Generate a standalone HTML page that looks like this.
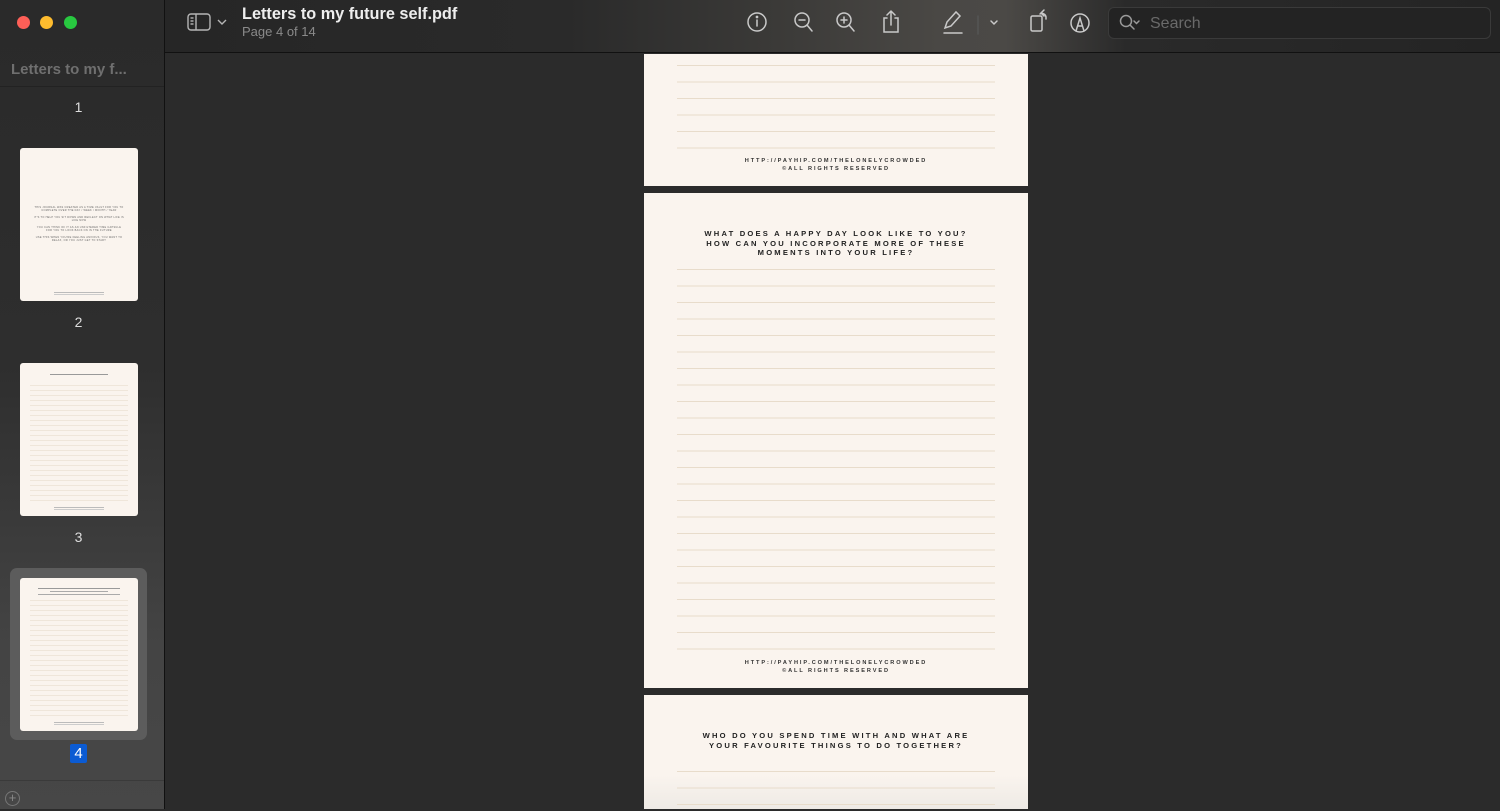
<!DOCTYPE html>
<html><head><meta charset="utf-8"><style>
*{margin:0;padding:0;box-sizing:border-box}
body{width:1500px;height:809px;overflow:hidden;background:#2b2b2b;font-family:"Liberation Sans",sans-serif;position:relative}
.abs{position:absolute}
#side{left:0;top:0;width:165px;height:809px;background:linear-gradient(#2a2a2a 0%,#2e2e2e 45%,#444 80%,#474747 100%);border-right:1px solid #111}
#tb{left:165px;top:0;width:1335px;height:53px;background:linear-gradient(90deg,#262626 0%,#2a2a2a 30%,#3a3937 45%,#4a4845 58%,#4b4946 63%,#2a2a2a 72%,#242424 100%);border-bottom:1px solid #111}
.th{position:absolute;left:20px;width:118px;height:153px;background:#faf4ee;border-radius:3px}
.num{position:absolute;left:0;width:157px;text-align:center;color:#ddd;font-size:14px}
.pg{position:absolute;left:644px;width:384px;background:#faf4ee}
.lines{position:absolute;left:33px;width:318px;background:repeating-linear-gradient(#e8dccb 0 1px,transparent 1px 16.5px)}
.q{position:absolute;left:0;width:384px;text-align:center;font-size:7.6px;font-weight:bold;letter-spacing:2.2px;line-height:9.5px;color:#222}
.ft{position:absolute;left:0;width:384px;text-align:center;font-size:5.6px;font-weight:bold;letter-spacing:1.9px;line-height:7.5px;color:#333}
.tl{position:absolute;left:10px;width:98px;background:repeating-linear-gradient(#efe6da 0 1px,transparent 1px 5px)}
</style></head><body>
<div id="side" class="abs">
 <div class="abs" style="left:17px;top:16px;width:13px;height:13px;border-radius:50%;background:#fe5f57"></div>
 <div class="abs" style="left:40px;top:16px;width:13px;height:13px;border-radius:50%;background:#febc2e"></div>
 <div class="abs" style="left:64px;top:16px;width:13px;height:13px;border-radius:50%;background:#28c840"></div>
 <div class="abs" style="left:11px;top:61px;color:#6f6f6f;font-size:15px;font-weight:bold">Letters to my f...</div>
 <div class="abs" style="left:0;top:86px;width:164px;height:1px;background:#222"></div>
 <div class="num" style="top:99px">1</div>
 <div class="th" style="top:148px">
  <div class="abs" style="left:14px;top:58px;width:90px;font-size:2.5px;line-height:3.3px;text-align:center;color:#666;letter-spacing:.3px">THIS JOURNAL WAS CREATED AS A TIME VAULT FOR YOU TO COMPLETE OVER THE DAY / WEEK / MONTH / YEAR<br><br>IT'S TO HELP YOU SIT DOWN AND REFLECT ON WHAT LIFE IS LIKE NOW<br><br>YOU CAN THINK OF IT AS AN UNFILTERED TIME CAPSULE FOR YOU TO LOOK BACK ON IN THE FUTURE<br><br>USE THIS WHEN YOU'RE FEELING ANXIOUS, YOU WANT TO RELAX, OR YOU JUST GET TO START</div>
  <div class="abs" style="left:34px;top:144px;width:50px;height:3px;border-top:1px solid #bbb;border-bottom:1px solid #ccc"></div>
 </div>
 <div class="num" style="top:314px">2</div>
 <div class="th" style="top:363px">
  <div class="abs" style="left:30px;top:11px;width:58px;height:1px;background:#999"></div>
  <div class="tl" style="top:22px;height:118px"></div>
  <div class="abs" style="left:34px;top:144px;width:50px;height:3px;border-top:1px solid #bbb;border-bottom:1px solid #ccc"></div>
 </div>
 <div class="num" style="top:529px">3</div>
 <div class="abs" style="left:10px;top:568px;width:137px;height:172px;background:#5c5c5c;border-radius:7px"></div>
 <div class="th" style="top:578px">
  <div class="abs" style="left:18px;top:10px;width:82px;height:7px;border-top:1px solid #999;border-bottom:1px solid #aaa"></div>
  <div class="abs" style="left:30px;top:13px;width:58px;height:1px;background:#aaa"></div>
  <div class="tl" style="top:22px;height:118px"></div>
  <div class="abs" style="left:34px;top:144px;width:50px;height:3px;border-top:1px solid #bbb;border-bottom:1px solid #ccc"></div>
 </div>
 <div class="abs" style="left:70px;top:744px;width:17px;height:19px;background:#0b5bd3;border-radius:2px;color:#fff;font-size:15px;text-align:center;line-height:19px">4</div>
 <div class="abs" style="left:0;top:780px;width:164px;height:1px;background:#3a3a3a"></div>
 <div class="abs" style="left:5px;top:791px;width:15px;height:15px;border:1px solid #777;border-radius:50%;color:#888;font-size:13px;line-height:12px;text-align:center">+</div>
</div>
<div id="tb" class="abs"></div>
<svg class="abs" style="left:186px;top:12px" width="44" height="22" viewBox="0 0 44 22" fill="none" stroke="#b5b5b5" stroke-width="1.4">
 <rect x="2" y="2" width="22" height="16" rx="3"/><line x1="10" y1="2" x2="10" y2="18"/>
 <line x1="4.5" y1="6" x2="7.5" y2="6"/><line x1="4.5" y1="9" x2="7.5" y2="9"/><line x1="4.5" y1="12" x2="7.5" y2="12"/>
 <path d="M32 8l4 4 4-4"/></svg>
<div class="abs" style="left:242px;top:5px;color:#eee;font-size:16.3px;font-weight:bold">Letters to my future self.pdf</div>
<div class="abs" style="left:242px;top:24px;color:#8a8a8a;font-size:13px">Page 4 of 14</div>
<svg class="abs" style="left:740px;top:6px" width="360" height="34" viewBox="0 0 360 34" fill="none" stroke="#c9c9c9" stroke-width="1.5" stroke-linecap="round">
 <circle cx="17" cy="16" r="9"/><line x1="17" y1="14" x2="17" y2="20"/><circle cx="17" cy="11" r=".6" fill="#c9c9c9"/>
 <circle cx="62" cy="14" r="7"/><line x1="67" y1="19" x2="72" y2="25"/><line x1="59" y1="14" x2="65" y2="14"/>
 <circle cx="104" cy="14" r="7"/><line x1="109" y1="19" x2="114" y2="25"/><line x1="101" y1="14" x2="107" y2="14"/><line x1="104" y1="11" x2="104" y2="17"/>
 <path d="M147 12h-3v14h14V12h-3M151 5v14M147 9l4-4 4 4"/>
 <path d="M205 22l2-6 9-10 4 4-9 10z M204 27h18"/>
 <line x1="238" y1="10" x2="238" y2="28" stroke="#555"/>
 <path d="M251 15l3 3 3-3"/>
 <rect x="291" y="10" width="11" height="15" rx="1.5"/><path d="M300 8a4 4 0 0 1 6 3v2M304 4l-3 3 3 3"/>
 <circle cx="340" cy="17" r="9"/><path d="M336 25l4-13 4 13M338 20h4"/>
</svg>
<div class="abs" style="left:1108px;top:7px;width:383px;height:32px;border:1px solid #3a3a3a;border-radius:6px;background:#232323"></div>
<svg class="abs" style="left:1118px;top:13px" width="26" height="20" fill="none" stroke="#9a9a9a" stroke-width="1.5" stroke-linecap="round"><circle cx="8" cy="8" r="5.5"/><line x1="12" y1="12" x2="16" y2="16"/><path d="M16 8l2.5 2.5L21 8"/></svg>
<div class="abs" style="left:1150px;top:15px;color:#6a6a6a;font-size:16px">Search</div>

<div class="pg" style="top:54px;height:132px">
 <div class="lines" style="top:11px;height:84px"></div>
 <div class="ft" style="top:104px">HTTP://PAYHIP.COM/THELONELYCROWDED<br>©ALL RIGHTS RESERVED</div>
</div>
<div class="pg" style="top:193px;height:495px">
 <div class="q" style="top:36px">WHAT DOES A HAPPY DAY LOOK LIKE TO YOU?<br>HOW CAN YOU INCORPORATE MORE OF THESE<br>MOMENTS INTO YOUR LIFE?</div>
 <div class="lines" style="top:76px;height:383px"></div>
 <div class="ft" style="top:467px">HTTP://PAYHIP.COM/THELONELYCROWDED<br>©ALL RIGHTS RESERVED</div>
</div>
<div class="pg" style="top:695px;height:114px;background:linear-gradient(#faf4ee 70%,#eeeae5 100%)">
 <div class="q" style="top:36px">WHO DO YOU SPEND TIME WITH AND WHAT ARE<br>YOUR FAVOURITE THINGS TO DO TOGETHER?</div>
 <div class="lines" style="top:76px;height:40px"></div>
</div>
</body></html>
